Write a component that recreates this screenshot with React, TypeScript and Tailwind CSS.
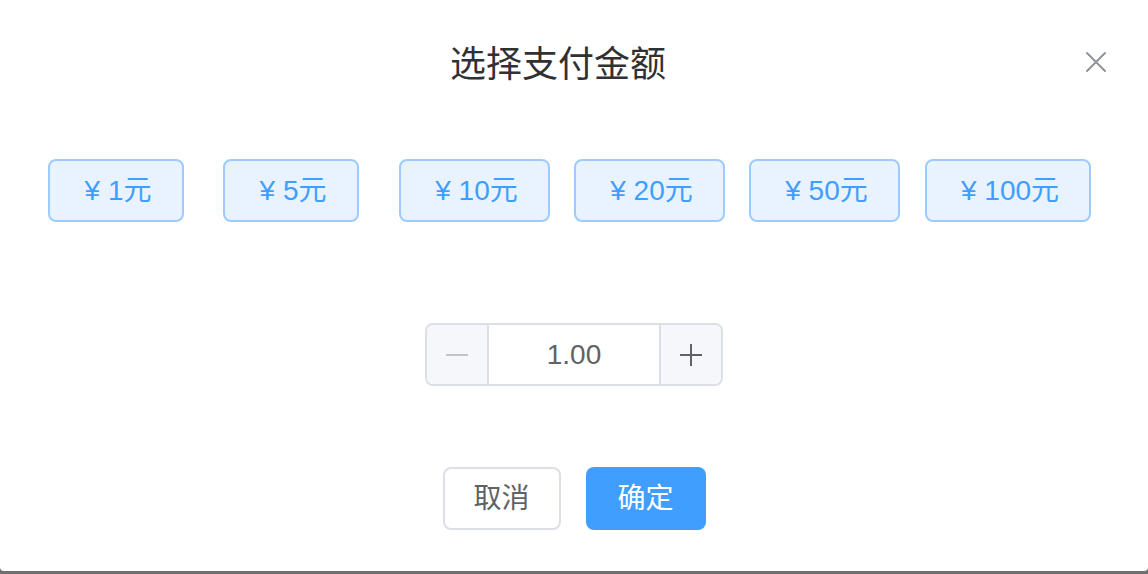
import React, { useState } from "react";

const AMOUNTS = [
  { value: 1, width: "w-[136px]", ml: "ml-0" },
  { value: 5, width: "w-[136px]", ml: "ml-[39px]" },
  { value: 10, width: "w-[151px]", ml: "ml-[40px]" },
  { value: 20, width: "w-[151px]", ml: "ml-[24px]" },
  { value: 50, width: "w-[151px]", ml: "ml-[24px]" },
  { value: 100, width: "w-[166px]", ml: "ml-[25px]" },
];

export default function App() {
  const [amount, setAmount] = useState(1);

  return (
    <div
      className="w-full h-[574px] bg-[#707070] overflow-hidden"
      style={{ fontFamily: '"Liberation Sans", "Noto Sans CJK SC", sans-serif' }}
    >
      <div className="relative h-[571px] bg-white rounded-b-[4px] flex flex-col">
        {/* Header */}
        <div className="pt-[41px] pr-[32px] h-[88px] text-center text-[36px] leading-[48px] text-[#303133]">
          选择支付金额
        </div>
        <button className="absolute top-[51px] right-[41px] w-[22px] h-[22px] flex items-center justify-center">
          <svg width="22" height="22" viewBox="0 0 22 22">
            <path d="M2 2 L20 20 M20 2 L2 20" stroke="#909399" strokeWidth="2" strokeLinecap="round" />
          </svg>
        </button>

        {/* Amount options */}
        <div className="flex pl-[48px] mt-[71px]">
          {AMOUNTS.map((a) => (
            <button
              key={a.value}
              onClick={() => setAmount(a.value)}
              className={`${a.width} ${a.ml} h-[63px] pl-[4px] border-2 border-[#9ecbff] bg-[#e8f3ff] rounded-[8px] text-[#409eff] text-[28px] flex items-center justify-center`}
            >
              ¥ {a.value}元
            </button>
          ))}
        </div>

        {/* Input number */}
        <div className="flex justify-center mt-[101px]">
          <div className="w-[298px] h-[63px] border-2 border-[#dcdfe6] rounded-[8px] flex overflow-hidden">
            <button
              onClick={() => setAmount(Math.max(1, amount - 1))}
              className="w-[62px] h-full bg-[#f5f7fa] border-r-2 border-[#dcdfe6] flex items-center justify-center"
            >
              <svg width="22" height="22" viewBox="0 0 22 22">
                <path d="M0 11 H22" stroke="#c0c4cc" strokeWidth="2" />
              </svg>
            </button>
            <div className="flex-1 flex items-center justify-center text-[28px] text-[#606266]">
              {amount.toFixed(2)}
            </div>
            <button
              onClick={() => setAmount(amount + 1)}
              className="w-[62px] h-full bg-[#f5f7fa] border-l-2 border-[#dcdfe6] flex items-center justify-center"
            >
              <svg width="22" height="22" viewBox="0 0 22 22">
                <path d="M0 11 H22 M11 0 V22" stroke="#606266" strokeWidth="2" />
              </svg>
            </button>
          </div>
        </div>

        {/* Footer */}
        <div className="flex justify-center gap-[25px] mt-[81px]">
          <button className="w-[118px] h-[63px] border-2 border-[#dcdfe6] rounded-[8px] bg-white text-[#606266] text-[28px] flex items-center justify-center">
            取消
          </button>
          <button className="w-[120px] h-[63px] rounded-[8px] bg-[#409eff] text-white text-[28px] flex items-center justify-center">
            确定
          </button>
        </div>
      </div>
    </div>
  );
}
